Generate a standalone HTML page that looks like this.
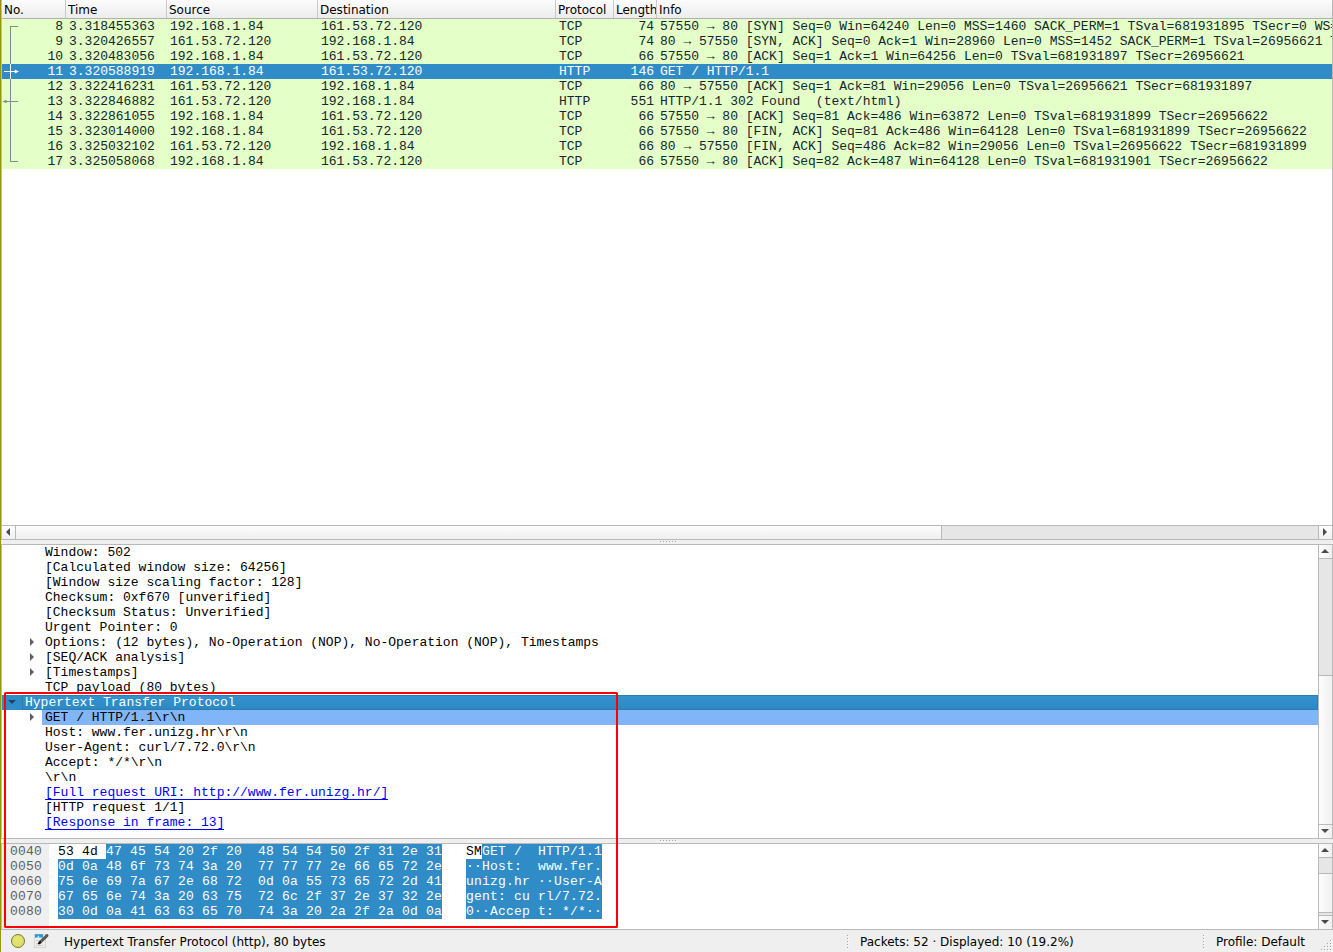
<!DOCTYPE html>
<html lang="en"><head><meta charset="utf-8"><title>Wireshark</title>
<style>
html,body{margin:0;padding:0;}
body{width:1333px;height:952px;position:relative;overflow:hidden;background:#efefef;font-family:"DejaVu Sans","Liberation Sans",sans-serif;font-size:12px;color:#000;}
.abs{position:absolute;}
.mono{font-family:"Liberation Mono","DejaVu Sans Mono",monospace;font-size:13px;line-height:15px;white-space:pre;}
#edge{left:0;top:0;width:1px;height:952px;background:#97970b;}
#plist{left:1px;top:0;width:1332px;height:525px;background:#fff;overflow:hidden;}
#phead{left:0;top:0;width:1332px;height:18px;background:linear-gradient(#fcfcfc,#ececec);border-bottom:1px solid #b0b0b0;}
.hc{position:absolute;top:0;height:18px;line-height:21px;font-size:12px;white-space:nowrap;overflow:hidden;color:#000;}
.hs{position:absolute;top:0;width:1px;height:18px;background:#c9c9c9;}
.row{position:absolute;left:1px;width:1330px;height:15px;background:#e4ffc7;color:#12272e;overflow:hidden;}
.row.sel{background:#308cc6;color:#fff;}
.c{position:absolute;top:0;height:15px;}
.r{text-align:right;}
.sb{background:#e6e6e6;}
.btn{background:linear-gradient(90deg,#fdfdfd,#f0f0f0);}
.tri{position:absolute;width:0;height:0;}
.drow{position:absolute;left:0;height:15px;width:1316px;}
.lnk{color:#0000ff;height:15px;box-shadow:inset 0 -1px 0 #0000ff;}
.st{line-height:16px;font-size:12px;white-space:nowrap;}
</style></head><body>

<div id="edge" class="abs"></div>
<div id="plist" class="abs">
<div id="phead" class="abs"></div>
<div class="hc" style="left:3px;width:61px">No.</div>
<div class="hs" style="left:64px"></div>
<div class="hc" style="left:67px;width:98px">Time</div>
<div class="hs" style="left:165px"></div>
<div class="hc" style="left:168px;width:148px">Source</div>
<div class="hs" style="left:316px"></div>
<div class="hc" style="left:319px;width:235px">Destination</div>
<div class="hs" style="left:554px"></div>
<div class="hc" style="left:557px;width:55px">Protocol</div>
<div class="hs" style="left:612px"></div>
<div class="hc" style="left:615px;width:40px">Length</div>
<div class="hs" style="left:655px"></div>
<div class="hc" style="left:658px;width:672px">Info</div>
<div class="row mono" style="top:19px"><span class="c r" style="left:0;width:61px">8</span><span class="c" style="left:67px">3.318455363</span><span class="c" style="left:168px">192.168.1.84</span><span class="c" style="left:319px">161.53.72.120</span><span class="c" style="left:557px">TCP</span><span class="c r" style="left:600px;width:52px">74</span><span class="c" style="left:658px;letter-spacing:-0.008px">57550 → 80 [SYN] Seq=0 Win=64240 Len=0 MSS=1460 SACK_PERM=1 TSval=681931895 TSecr=0 WS=128</span></div>
<div class="row mono" style="top:34px"><span class="c r" style="left:0;width:61px">9</span><span class="c" style="left:67px">3.320426557</span><span class="c" style="left:168px">161.53.72.120</span><span class="c" style="left:319px">192.168.1.84</span><span class="c" style="left:557px">TCP</span><span class="c r" style="left:600px;width:52px">74</span><span class="c" style="left:658px;letter-spacing:-0.008px">80 → 57550 [SYN, ACK] Seq=0 Ack=1 Win=28960 Len=0 MSS=1452 SACK_PERM=1 TSval=26956621 TSecr=681931895 WS=128</span></div>
<div class="row mono" style="top:49px"><span class="c r" style="left:0;width:61px">10</span><span class="c" style="left:67px">3.320483056</span><span class="c" style="left:168px">192.168.1.84</span><span class="c" style="left:319px">161.53.72.120</span><span class="c" style="left:557px">TCP</span><span class="c r" style="left:600px;width:52px">66</span><span class="c" style="left:658px;letter-spacing:-0.008px">57550 → 80 [ACK] Seq=1 Ack=1 Win=64256 Len=0 TSval=681931897 TSecr=26956621</span></div>
<div class="row mono sel" style="top:64px"><span class="c r" style="left:0;width:61px">11</span><span class="c" style="left:67px">3.320588919</span><span class="c" style="left:168px">192.168.1.84</span><span class="c" style="left:319px">161.53.72.120</span><span class="c" style="left:557px">HTTP</span><span class="c r" style="left:600px;width:52px">146</span><span class="c" style="left:658px;letter-spacing:-0.008px">GET / HTTP/1.1 </span></div>
<div class="row mono" style="top:79px"><span class="c r" style="left:0;width:61px">12</span><span class="c" style="left:67px">3.322416231</span><span class="c" style="left:168px">161.53.72.120</span><span class="c" style="left:319px">192.168.1.84</span><span class="c" style="left:557px">TCP</span><span class="c r" style="left:600px;width:52px">66</span><span class="c" style="left:658px;letter-spacing:-0.008px">80 → 57550 [ACK] Seq=1 Ack=81 Win=29056 Len=0 TSval=26956621 TSecr=681931897</span></div>
<div class="row mono" style="top:94px"><span class="c r" style="left:0;width:61px">13</span><span class="c" style="left:67px">3.322846882</span><span class="c" style="left:168px">161.53.72.120</span><span class="c" style="left:319px">192.168.1.84</span><span class="c" style="left:557px">HTTP</span><span class="c r" style="left:600px;width:52px">551</span><span class="c" style="left:658px;letter-spacing:-0.008px">HTTP/1.1 302 Found  (text/html)</span></div>
<div class="row mono" style="top:109px"><span class="c r" style="left:0;width:61px">14</span><span class="c" style="left:67px">3.322861055</span><span class="c" style="left:168px">192.168.1.84</span><span class="c" style="left:319px">161.53.72.120</span><span class="c" style="left:557px">TCP</span><span class="c r" style="left:600px;width:52px">66</span><span class="c" style="left:658px;letter-spacing:-0.008px">57550 → 80 [ACK] Seq=81 Ack=486 Win=63872 Len=0 TSval=681931899 TSecr=26956622</span></div>
<div class="row mono" style="top:124px"><span class="c r" style="left:0;width:61px">15</span><span class="c" style="left:67px">3.323014000</span><span class="c" style="left:168px">192.168.1.84</span><span class="c" style="left:319px">161.53.72.120</span><span class="c" style="left:557px">TCP</span><span class="c r" style="left:600px;width:52px">66</span><span class="c" style="left:658px;letter-spacing:-0.008px">57550 → 80 [FIN, ACK] Seq=81 Ack=486 Win=64128 Len=0 TSval=681931899 TSecr=26956622</span></div>
<div class="row mono" style="top:139px"><span class="c r" style="left:0;width:61px">16</span><span class="c" style="left:67px">3.325032102</span><span class="c" style="left:168px">161.53.72.120</span><span class="c" style="left:319px">192.168.1.84</span><span class="c" style="left:557px">TCP</span><span class="c r" style="left:600px;width:52px">66</span><span class="c" style="left:658px;letter-spacing:-0.008px">80 → 57550 [FIN, ACK] Seq=486 Ack=82 Win=29056 Len=0 TSval=26956622 TSecr=681931899</span></div>
<div class="row mono" style="top:154px"><span class="c r" style="left:0;width:61px">17</span><span class="c" style="left:67px">3.325058068</span><span class="c" style="left:168px">192.168.1.84</span><span class="c" style="left:319px">161.53.72.120</span><span class="c" style="left:557px">TCP</span><span class="c r" style="left:600px;width:52px">66</span><span class="c" style="left:658px;letter-spacing:-0.008px">57550 → 80 [ACK] Seq=82 Ack=487 Win=64128 Len=0 TSval=681931901 TSecr=26956622</span></div>
<svg class="abs" style="left:0;top:19px" width="30" height="150" viewBox="0 0 30 150" shape-rendering="crispEdges">
<g stroke="#808c86" stroke-width="1" fill="none">
<path d="M9 7.5H17"/><path d="M9.5 7V143"/><path d="M9 142.5H17"/>
<path d="M3 82.5H17"/>
</g>
<path d="M1.5 82.5L5.5 80.7V84.3Z" fill="#808c86" shape-rendering="auto"/>
<g stroke="#fff" stroke-width="1" fill="none"><path d="M9.5 45V60"/><path d="M3 52.5H15"/></g>
<path d="M18 52.5L13.8 50.6V54.4Z" fill="#fff" shape-rendering="auto"/>
</svg>
</div>
<div class="abs" style="left:1px;top:525px;width:1331px;height:15px;background:#e6e6e6;border-top:1px solid #b9b9b9;border-bottom:1px solid #b9b9b9;box-sizing:border-box"></div>
<div class="abs" style="left:1px;top:526px;width:14px;height:13px;background:linear-gradient(#fdfdfd,#f0f0f0);border-right:1px solid #b9b9b9"></div>
<div class="abs" style="left:16px;top:526px;width:925px;height:13px;background:linear-gradient(#fdfdfd,#efefef);border-right:1px solid #b9b9b9"></div>
<div class="abs" style="left:1318px;top:526px;width:14px;height:13px;background:linear-gradient(#fdfdfd,#f0f0f0);border-left:1px solid #b9b9b9"></div>
<div class="tri" style="left:6px;top:528px;border-top:4px solid transparent;border-bottom:4px solid transparent;border-right:4px solid #4b4b4b"></div>
<div class="tri" style="left:1323px;top:528px;border-top:4px solid transparent;border-bottom:4px solid transparent;border-left:4px solid #4b4b4b"></div>
<div class="abs" style="left:1332px;top:0;width:1px;height:540px;background:#b9b9b9"></div>

<div class="abs" style="left:1px;top:544px;width:1332px;height:295px;background:#fff;border-top:1px solid #b9b9b9;border-bottom:1px solid #b9b9b9;border-right:1px solid #b9b9b9;box-sizing:border-box;overflow:hidden">
<div class="abs mono" style="left:44px;top:0px;">Window: 502</div>
<div class="abs mono" style="left:44px;top:15px;">[Calculated window size: 64256]</div>
<div class="abs mono" style="left:44px;top:30px;">[Window size scaling factor: 128]</div>
<div class="abs mono" style="left:44px;top:45px;">Checksum: 0xf670 [unverified]</div>
<div class="abs mono" style="left:44px;top:60px;">[Checksum Status: Unverified]</div>
<div class="abs mono" style="left:44px;top:75px;">Urgent Pointer: 0</div>
<div class="abs mono" style="left:44px;top:90px;">Options: (12 bytes), No-Operation (NOP), No-Operation (NOP), Timestamps</div>
<div class="tri" style="left:29px;top:93.3px;border-top:4px solid transparent;border-bottom:4px solid transparent;border-left:4px solid #606060"></div>
<div class="abs mono" style="left:44px;top:105px;">[SEQ/ACK analysis]</div>
<div class="tri" style="left:29px;top:108.3px;border-top:4px solid transparent;border-bottom:4px solid transparent;border-left:4px solid #606060"></div>
<div class="abs mono" style="left:44px;top:120px;">[Timestamps]</div>
<div class="tri" style="left:29px;top:123.3px;border-top:4px solid transparent;border-bottom:4px solid transparent;border-left:4px solid #606060"></div>
<div class="abs mono" style="left:44px;top:135px;">TCP payload (80 bytes)</div>
<div class="abs" style="left:1px;top:150px;width:20px;height:15px;background:#308cc6"></div>
<div class="abs" style="left:21px;top:150px;width:1296px;height:15px;box-sizing:border-box;background:linear-gradient(#3392cd,#2e89c2);border:1px solid #2a7db2"></div>
<div class="abs mono" style="left:24px;top:150px;color:#fff">Hypertext Transfer Protocol</div>
<div class="tri" style="left:7px;top:155px;border-left:4px solid transparent;border-right:4px solid transparent;border-top:4px solid #1a4463"></div>
<div class="abs" style="left:41px;top:165px;width:1276px;height:15px;background:#80b6f7"></div>
<div class="abs mono" style="left:44px;top:165px;">GET / HTTP/1.1\r\n</div>
<div class="tri" style="left:29px;top:168.3px;border-top:4px solid transparent;border-bottom:4px solid transparent;border-left:4px solid #606060"></div>
<div class="abs mono" style="left:44px;top:180px;">Host: www.fer.unizg.hr\r\n</div>
<div class="abs mono" style="left:44px;top:195px;">User-Agent: curl/7.72.0\r\n</div>
<div class="abs mono" style="left:44px;top:210px;">Accept: */*\r\n</div>
<div class="abs mono" style="left:44px;top:225px;">\r\n</div>
<div class="abs mono lnk" style="left:44px;top:240px;">[Full request URI: http://www.fer.unizg.hr/]</div>
<div class="abs mono" style="left:44px;top:255px;">[HTTP request 1/1]</div>
<div class="abs mono lnk" style="left:44px;top:270px;">[Response in frame: 13]</div>
<div class="abs" style="left:1317px;top:0;width:14px;height:293px;background:#e6e6e6;border-left:1px solid #b9b9b9;box-sizing:border-box"></div>
<div class="abs" style="left:1318px;top:0;width:13px;height:13px;background:linear-gradient(90deg,#fdfdfd,#f0f0f0);border-bottom:1px solid #b9b9b9"></div>
<div class="abs" style="left:1318px;top:130px;width:13px;height:148px;background:linear-gradient(90deg,#fdfdfd,#f0f0f0);border-top:1px solid #b9b9b9;border-bottom:1px solid #b9b9b9"></div>
<div class="abs" style="left:1318px;top:280px;width:13px;height:13px;background:linear-gradient(90deg,#fdfdfd,#f0f0f0)"></div>
<div class="tri" style="left:1320px;top:4px;border-left:4px solid transparent;border-right:4px solid transparent;border-bottom:4px solid #4b4b4b"></div>
<div class="tri" style="left:1320px;top:284px;border-left:4px solid transparent;border-right:4px solid transparent;border-top:4px solid #4b4b4b"></div>

</div>
<div class="abs" style="left:1px;top:843px;width:1332px;height:87px;background:#fff;border-top:1px solid #b9b9b9;border-bottom:1px solid #b9b9b9;border-right:1px solid #b9b9b9;box-sizing:border-box;overflow:hidden">
<div class="abs" style="left:1px;top:0;width:47px;height:85px;background:#efefef"></div>
<div class="abs" style="left:105px;top:0px;width:336px;height:15px;background:#308cc6"></div>
<div class="abs" style="left:481px;top:0px;width:120px;height:15px;background:#308cc6"></div>
<div class="abs mono" style="left:9px;top:0px;color:#5e5e5e;letter-spacing:0.2px">0040</div>
<div class="abs mono" style="left:57px;top:0px;letter-spacing:0.2px;color:#fff"><span style="color:#000">53 4d </span>47 45 54 20 2f 20  48 54 54 50 2f 31 2e 31</div>
<div class="abs mono" style="left:465px;top:0px;letter-spacing:0.2px;color:#fff"><span style="color:#000">SM</span>GET /  HTTP/1.1</div>
<div class="abs" style="left:57px;top:15px;width:384px;height:15px;background:#308cc6"></div>
<div class="abs" style="left:465px;top:15px;width:136px;height:15px;background:#308cc6"></div>
<div class="abs mono" style="left:9px;top:15px;color:#5e5e5e;letter-spacing:0.2px">0050</div>
<div class="abs mono" style="left:57px;top:15px;letter-spacing:0.2px;color:#fff">0d 0a 48 6f 73 74 3a 20  77 77 77 2e 66 65 72 2e</div>
<div class="abs mono" style="left:465px;top:15px;letter-spacing:0.2px;color:#fff">··Host:  www.fer.</div>
<div class="abs" style="left:57px;top:30px;width:384px;height:15px;background:#308cc6"></div>
<div class="abs" style="left:465px;top:30px;width:136px;height:15px;background:#308cc6"></div>
<div class="abs mono" style="left:9px;top:30px;color:#5e5e5e;letter-spacing:0.2px">0060</div>
<div class="abs mono" style="left:57px;top:30px;letter-spacing:0.2px;color:#fff">75 6e 69 7a 67 2e 68 72  0d 0a 55 73 65 72 2d 41</div>
<div class="abs mono" style="left:465px;top:30px;letter-spacing:0.2px;color:#fff">unizg.hr ··User-A</div>
<div class="abs" style="left:57px;top:45px;width:384px;height:15px;background:#308cc6"></div>
<div class="abs" style="left:465px;top:45px;width:136px;height:15px;background:#308cc6"></div>
<div class="abs mono" style="left:9px;top:45px;color:#5e5e5e;letter-spacing:0.2px">0070</div>
<div class="abs mono" style="left:57px;top:45px;letter-spacing:0.2px;color:#fff">67 65 6e 74 3a 20 63 75  72 6c 2f 37 2e 37 32 2e</div>
<div class="abs mono" style="left:465px;top:45px;letter-spacing:0.2px;color:#fff">gent: cu rl/7.72.</div>
<div class="abs" style="left:57px;top:60px;width:384px;height:15px;background:#308cc6"></div>
<div class="abs" style="left:465px;top:60px;width:136px;height:15px;background:#308cc6"></div>
<div class="abs mono" style="left:9px;top:60px;color:#5e5e5e;letter-spacing:0.2px">0080</div>
<div class="abs mono" style="left:57px;top:60px;letter-spacing:0.2px;color:#fff">30 0d 0a 41 63 63 65 70  74 3a 20 2a 2f 2a 0d 0a</div>
<div class="abs mono" style="left:465px;top:60px;letter-spacing:0.2px;color:#fff">0··Accep t: */*··</div>
<div class="abs" style="left:1317px;top:0;width:14px;height:85px;background:#e6e6e6;border-left:1px solid #b9b9b9;box-sizing:border-box"></div>
<div class="abs" style="left:1318px;top:0;width:13px;height:13px;background:linear-gradient(90deg,#fdfdfd,#f0f0f0);border-bottom:1px solid #b9b9b9"></div>
<div class="abs" style="left:1318px;top:29px;width:13px;height:38px;background:linear-gradient(90deg,#fdfdfd,#f0f0f0);border-top:1px solid #b9b9b9;border-bottom:1px solid #b9b9b9"></div>
<div class="abs" style="left:1318px;top:71px;width:13px;height:14px;background:linear-gradient(90deg,#fdfdfd,#f0f0f0);border-top:1px solid #b9b9b9"></div>
<div class="tri" style="left:1320px;top:4px;border-left:4px solid transparent;border-right:4px solid transparent;border-bottom:4px solid #4b4b4b"></div>
<div class="tri" style="left:1320px;top:76px;border-left:4px solid transparent;border-right:4px solid transparent;border-top:4px solid #4b4b4b"></div>

</div>
<div class="abs" style="left:4px;top:692px;width:614px;height:236px;border:2px solid #ff0000;border-radius:1.5px;box-sizing:border-box"></div>
<div class="abs" style="left:11px;top:934px;width:12px;height:12px;border-radius:50%;background:radial-gradient(circle at 40% 35%,#e6e67a,#dada5c);border:1px solid #77772a"></div>
<svg class="abs" style="left:34px;top:933px" width="16" height="16" viewBox="0 0 16 16"><rect x="0.5" y="1.5" width="11" height="13" fill="#f0f0ea" stroke="#d6d6ce"/><rect x="1" y="1.2" width="8" height="3.4" fill="#2a9ad8"/><path d="M3.2 4.6L4.6 2.4L5.4 4.6Z" fill="#fff"/><path d="M2 7.5H6M2 10.5H5M2 12.5H9" stroke="#cfcfcf" stroke-width="1"/><path d="M13 2.6L6 9.4" stroke="#505050" stroke-width="2.9" stroke-linecap="round"/><path d="M12.6 3L6.6 8.8" stroke="#9a9a9a" stroke-width="1" stroke-dasharray="0.7 0.9"/><path d="M6.2 9.2L4.8 10.5" stroke="#0a0a0a" stroke-width="1.8" stroke-linecap="round"/></svg>
<div class="abs st" style="left:64px;top:934px">Hypertext Transfer Protocol (http), 80 bytes</div>
<div class="abs st" style="left:860px;top:934px">Packets: 52 · Displayed: 10 (19.2%)</div>
<div class="abs st" style="left:1216px;top:934px">Profile: Default</div>
<i class="abs" style="left:848px;top:936px;width:1px;height:1px;background:#fff"></i><i class="abs" style="left:847px;top:935px;width:1px;height:1px;background:#a4a4a4"></i>
<i class="abs" style="left:848px;top:939px;width:1px;height:1px;background:#fff"></i><i class="abs" style="left:847px;top:938px;width:1px;height:1px;background:#a4a4a4"></i>
<i class="abs" style="left:848px;top:942px;width:1px;height:1px;background:#fff"></i><i class="abs" style="left:847px;top:941px;width:1px;height:1px;background:#a4a4a4"></i>
<i class="abs" style="left:848px;top:945px;width:1px;height:1px;background:#fff"></i><i class="abs" style="left:847px;top:944px;width:1px;height:1px;background:#a4a4a4"></i>
<i class="abs" style="left:848px;top:948px;width:1px;height:1px;background:#fff"></i><i class="abs" style="left:847px;top:947px;width:1px;height:1px;background:#a4a4a4"></i>
<i class="abs" style="left:1204px;top:936px;width:1px;height:1px;background:#fff"></i><i class="abs" style="left:1203px;top:935px;width:1px;height:1px;background:#a4a4a4"></i>
<i class="abs" style="left:1204px;top:939px;width:1px;height:1px;background:#fff"></i><i class="abs" style="left:1203px;top:938px;width:1px;height:1px;background:#a4a4a4"></i>
<i class="abs" style="left:1204px;top:942px;width:1px;height:1px;background:#fff"></i><i class="abs" style="left:1203px;top:941px;width:1px;height:1px;background:#a4a4a4"></i>
<i class="abs" style="left:1204px;top:945px;width:1px;height:1px;background:#fff"></i><i class="abs" style="left:1203px;top:944px;width:1px;height:1px;background:#a4a4a4"></i>
<i class="abs" style="left:1204px;top:948px;width:1px;height:1px;background:#fff"></i><i class="abs" style="left:1203px;top:947px;width:1px;height:1px;background:#a4a4a4"></i>
<i class="abs" style="left:1331px;top:941px;width:1px;height:1px;background:#fff"></i><i class="abs" style="left:1330px;top:940px;width:1px;height:1px;background:#a4a4a4"></i>
<i class="abs" style="left:1331px;top:944px;width:1px;height:1px;background:#fff"></i><i class="abs" style="left:1330px;top:943px;width:1px;height:1px;background:#a4a4a4"></i>
<i class="abs" style="left:1328px;top:944px;width:1px;height:1px;background:#fff"></i><i class="abs" style="left:1327px;top:943px;width:1px;height:1px;background:#a4a4a4"></i>
<i class="abs" style="left:1331px;top:947px;width:1px;height:1px;background:#fff"></i><i class="abs" style="left:1330px;top:946px;width:1px;height:1px;background:#a4a4a4"></i>
<i class="abs" style="left:1328px;top:947px;width:1px;height:1px;background:#fff"></i><i class="abs" style="left:1327px;top:946px;width:1px;height:1px;background:#a4a4a4"></i>
<i class="abs" style="left:1325px;top:947px;width:1px;height:1px;background:#fff"></i><i class="abs" style="left:1324px;top:946px;width:1px;height:1px;background:#a4a4a4"></i>
<i class="abs" style="left:1331px;top:950px;width:1px;height:1px;background:#fff"></i><i class="abs" style="left:1330px;top:949px;width:1px;height:1px;background:#a4a4a4"></i>
<i class="abs" style="left:1328px;top:950px;width:1px;height:1px;background:#fff"></i><i class="abs" style="left:1327px;top:949px;width:1px;height:1px;background:#a4a4a4"></i>
<i class="abs" style="left:1325px;top:950px;width:1px;height:1px;background:#fff"></i><i class="abs" style="left:1324px;top:949px;width:1px;height:1px;background:#a4a4a4"></i>
<i class="abs" style="left:1322px;top:950px;width:1px;height:1px;background:#fff"></i><i class="abs" style="left:1321px;top:949px;width:1px;height:1px;background:#a4a4a4"></i>
<i class="abs" style="left:661px;top:542px;width:1px;height:1px;background:#fff"></i><i class="abs" style="left:660px;top:541px;width:1px;height:1px;background:#a4a4a4"></i>
<i class="abs" style="left:664px;top:542px;width:1px;height:1px;background:#fff"></i><i class="abs" style="left:663px;top:541px;width:1px;height:1px;background:#a4a4a4"></i>
<i class="abs" style="left:667px;top:542px;width:1px;height:1px;background:#fff"></i><i class="abs" style="left:666px;top:541px;width:1px;height:1px;background:#a4a4a4"></i>
<i class="abs" style="left:670px;top:542px;width:1px;height:1px;background:#fff"></i><i class="abs" style="left:669px;top:541px;width:1px;height:1px;background:#a4a4a4"></i>
<i class="abs" style="left:673px;top:542px;width:1px;height:1px;background:#fff"></i><i class="abs" style="left:672px;top:541px;width:1px;height:1px;background:#a4a4a4"></i>
<i class="abs" style="left:676px;top:542px;width:1px;height:1px;background:#fff"></i><i class="abs" style="left:675px;top:541px;width:1px;height:1px;background:#a4a4a4"></i>
<i class="abs" style="left:661px;top:841px;width:1px;height:1px;background:#fff"></i><i class="abs" style="left:660px;top:840px;width:1px;height:1px;background:#a4a4a4"></i>
<i class="abs" style="left:664px;top:841px;width:1px;height:1px;background:#fff"></i><i class="abs" style="left:663px;top:840px;width:1px;height:1px;background:#a4a4a4"></i>
<i class="abs" style="left:667px;top:841px;width:1px;height:1px;background:#fff"></i><i class="abs" style="left:666px;top:840px;width:1px;height:1px;background:#a4a4a4"></i>
<i class="abs" style="left:670px;top:841px;width:1px;height:1px;background:#fff"></i><i class="abs" style="left:669px;top:840px;width:1px;height:1px;background:#a4a4a4"></i>
<i class="abs" style="left:673px;top:841px;width:1px;height:1px;background:#fff"></i><i class="abs" style="left:672px;top:840px;width:1px;height:1px;background:#a4a4a4"></i>
<i class="abs" style="left:676px;top:841px;width:1px;height:1px;background:#fff"></i><i class="abs" style="left:675px;top:840px;width:1px;height:1px;background:#a4a4a4"></i>
<div class="abs" style="left:1px;top:0px;width:1px;height:540px;background:#bcbcc0"></div>
<div class="abs" style="left:1px;top:544px;width:1px;height:295px;background:#bcbcc0"></div>
<div class="abs" style="left:1px;top:843px;width:1px;height:87px;background:#bcbcc0"></div>
</body></html>
